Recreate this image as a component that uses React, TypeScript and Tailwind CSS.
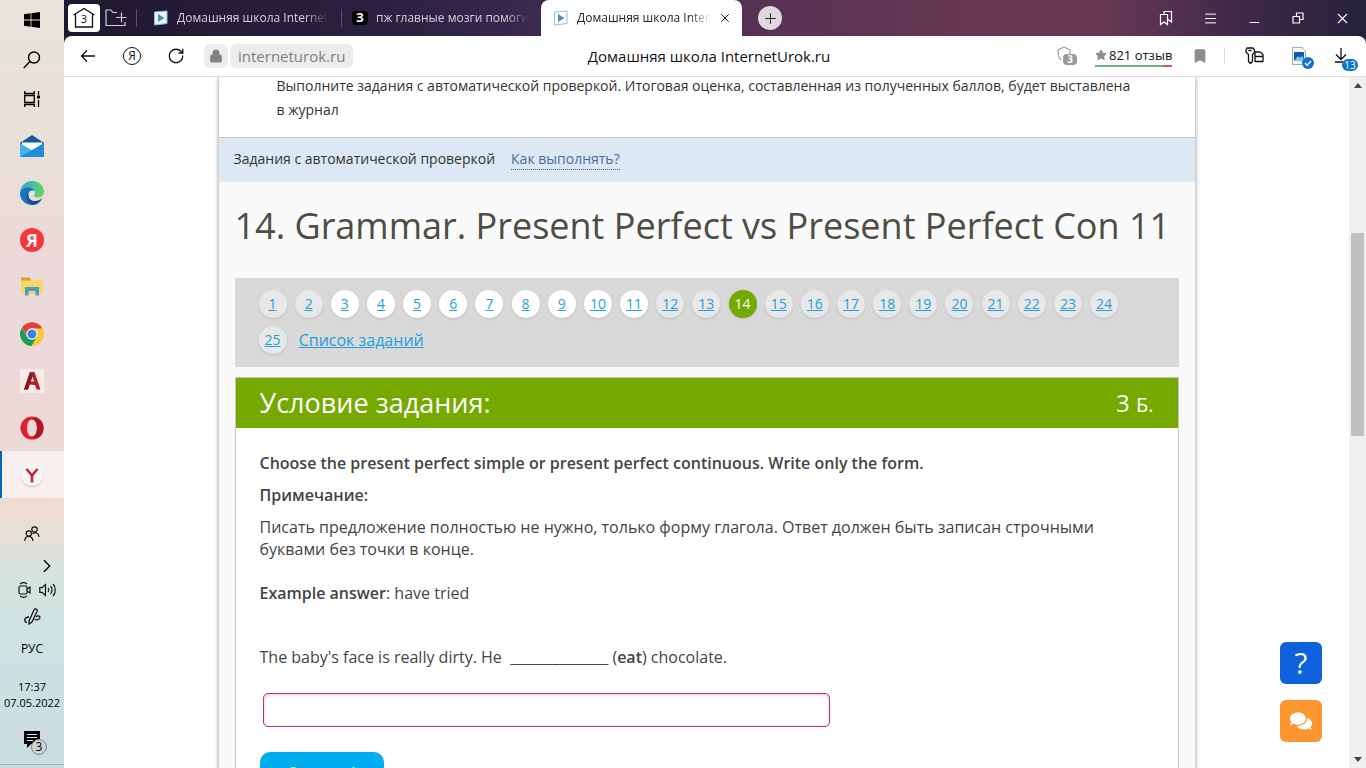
import type { ReactNode } from "react";
import { Bookmark, ChevronRight, Lock, Menu, Minus, Plus, RotateCw, Search, Star, X } from "lucide-react";
import { FaComments } from "react-icons/fa";

const tasks = Array.from({ length: 25 }, (_, i) => i + 1);
const currentTask = 14;

function taskClass(n: number) {
  if (n === currentTask) return "bg-[#76a900] text-white";
  if (n >= 3 && n <= 11) return "bg-white text-[#239fd9] underline";
  return "bg-[#e8e8e8] text-[#239fd9] underline";
}

function SideButton({ label, active, children }: { label: string; active?: boolean; children: ReactNode }) {
  return (
    <button
      aria-label={label}
      className={
        active
          ? "flex h-[47px] w-full shrink-0 items-center justify-center border-l-2 border-[#0067c0] bg-[#f7eeed] pr-0.5"
          : "flex h-[47px] w-full shrink-0 items-center justify-center"
      }
    >
      {children}
    </button>
  );
}

function PlayIcon({ dark }: { dark?: boolean }) {
  return (
    <svg width="16" height="16" viewBox="0 0 16 16" className="shrink-0">
      <path d="M1.500 2 14 1V13.500L1.500 15Z" fill={dark ? "#e4f4fb" : "#fff"} stroke="#8fc0d8" />
      <path d="M5 4 11.500 8 5 12Z" fill="#4e8fb4" />
    </svg>
  );
}

function Taskbar() {
  return (
    <aside className="flex w-16 shrink-0 flex-col items-center overflow-hidden bg-[linear-gradient(180deg,#e6e3da_0%,#e9e0d8_18%,#ecd9d9_35%,#ecd9d8_58%,#efddd2_67%,#d5e4df_75%,#cde2e1_84%,#c9dde2_100%)]">
      <button aria-label="Пуск" className="flex h-10 shrink-0 items-center">
        <svg width="16" height="16" viewBox="0 0 16 16">
          <path d="M0 2.200 6.600 1.300V7.500H0ZM7.400 1.200 16 0V7.500H7.400ZM0 8.400H6.600V14.700L0 13.800ZM7.400 8.400H16V16L7.400 14.800Z" />
        </svg>
      </button>
      <button aria-label="Поиск" className="flex h-10 shrink-0 items-center">
        <svg width="18" height="18" viewBox="0 0 18 18" fill="none" stroke="#000" strokeWidth="1.400">
          <circle cx="11" cy="6.500" r="5.500" />
          <path d="M7 10.500.8 17" />
        </svg>
      </button>
      <button aria-label="Представление задач" className="mb-1 flex h-[38px] shrink-0 items-center">
        <svg width="16" height="16" viewBox="0 0 16 16" fill="none" stroke="#000" strokeWidth="1.300">
          <path d="M.7 0V2.500H10.300V0M.7 16V13.500H10.300V16M.7 4.500H10.300V11.500H.7ZM14.500 0V4M14.500 9V16" />
          <path d="M13 4.500H16V7.500H13Z" fill="#000" stroke="none" />
        </svg>
      </button>
      <SideButton label="Почта">
        <svg width="24" height="22" viewBox="0 0 24 22">
          <path d="M0 8 12 0 24 8V11H0Z" fill="#135a9e" />
          <path d="M2 7.500H22V17H2Z" fill="#fff" />
          <path d="M0 8 12 15.500 24 8V22H0Z" fill="#3fb4ef" />
          <path d="M0 22 24 8V22Z" fill="#1f8fdb" />
        </svg>
      </SideButton>
      <SideButton label="Edge">
        <svg width="24" height="24" viewBox="0 0 24 24">
          <defs>
            <linearGradient id="edge" x1="0" y1="0" x2="1" y2="0.400">
              <stop offset="0" stopColor="#2aa4e4" />
              <stop offset="1" stopColor="#5fd668" />
            </linearGradient>
          </defs>
          <path d="M0 11C1 4 6 0 12 0c7 0 12 5 12 10.500 0 4-3 6-6 6-2.500 0-4-1-4-2 0-.7 1-1 1-3 0-2.500-2.500-4-5.500-4C5 7.500 2 9 0 11Z" fill="url(#edge)" />
          <path d="M0 12C1 8.500 4 6.500 8.500 6.500c3 0 5.500 1.500 6 3.500C9 8 6.500 12.500 8 17c1 3.500 4 6 7 6.500C7 25.500 0 20 0 12Z" fill="#1473c4" />
          <path d="M9.500 10C7 14 9 20 14.500 20c3 0 6-1 8-3-2 4-5 6.500-8.500 7C7 23 4 14 9.500 10Z" fill="#124c91" />
        </svg>
      </SideButton>
      <SideButton label="Яндекс">
        <span className="flex size-6 items-center justify-center rounded-full bg-[#f8353b] text-lg font-bold text-white">Я</span>
      </SideButton>
      <SideButton label="Проводник">
        <svg width="22" height="19" viewBox="0 0 22 19">
          <path d="M0 1H9L11 3.500H22V17H0Z" fill="#f9d466" />
          <path d="M0 .5H8.500L10 3.500H0Z" fill="#d9a11e" />
          <path d="M4 10H18V18.500H14.500V14H7.500V18.500H4Z" fill="#4a9ccb" />
        </svg>
      </SideButton>
      <SideButton label="Chrome">
        <svg width="24" height="24" viewBox="0 0 24 24">
          <path d="M12 12V6.500H22.500A12 12 0 0 1 11.500 24L16.800 14.700Z" fill="#fcc934" />
          <path d="M12 12 16.800 14.700 11.500 24A12 12 0 0 1 2 5.500L7.200 14.700Z" fill="#1f9d55" />
          <path d="M2 5.500A12 12 0 0 1 22.500 6.500H12L7 13.500Z" fill="#dc4437" />
          <circle cx="12" cy="12" r="5.700" fill="#fff" />
          <circle cx="12" cy="12" r="4.500" fill="#3b7fe8" />
        </svg>
      </SideButton>
      <SideButton label="AutoCAD">
        <svg width="24" height="24" viewBox="0 0 24 24">
          <path d="M0 0H24V24H0Z" fill="#f7ebe7" />
          <path d="M4 20.500 10 3H14.500L20.500 20.500H16.500L15 16 9.500 15.500 8 20.500ZM10.500 12.500H14L12.500 7.500Z" fill="#b3222b" fillRule="evenodd" />
          <path d="M4 20.500 10 3 12.500 7.500 8 20.500Z" fill="#8c1720" />
        </svg>
      </SideButton>
      <SideButton label="Opera">
        <svg width="24" height="24" viewBox="0 0 24 24">
          <path d="M12 .5A11.500 11.500 0 1 0 12 23.500 11.500 11.500 0 1 0 12 .5ZM12 3.500C15 3.500 17 7 17 12S15 20.500 12 20.500 7 17 7 12 9 3.500 12 3.500Z" fill="#e0202e" fillRule="evenodd" />
          <path d="M16 1.200A11.500 11.500 0 0 1 16 22.800L12 20.500C15 20.500 17 17 17 12S15 3.500 12 3.500Z" fill="#b01722" />
        </svg>
      </SideButton>
      <SideButton label="Яндекс Браузер" active>
        <svg width="24" height="24" viewBox="0 0 24 24">
          <circle cx="12" cy="12.500" r="11.500" fill="#c8c4c4" />
          <circle cx="12" cy="11.500" r="11.500" fill="#f6f4f4" />
          <path d="M6.500 6 12 12.500 17.500 6M12 12.500V19.500" fill="none" stroke="#d3202f" strokeWidth="2.600" />
        </svg>
      </SideButton>
      <div className="flex w-full flex-1 flex-col items-center pt-[26px]">
        <button aria-label="Люди" className="flex h-5 items-center">
          <svg width="16" height="16" viewBox="0 0 16 16" fill="none" stroke="#111" strokeWidth="1.200">
            <circle cx="10.500" cy="3.500" r="2.700" />
            <circle cx="4.800" cy="7.500" r="2.600" />
            <path d="M.8 15C.8 9 8.800 9 8.800 15M8.500 7.800C11 5.300 15 7 15 11" />
          </svg>
        </button>
        <button aria-label="Показать значки" className="mt-3 flex h-5 w-full items-center justify-end pr-1.5">
          <ChevronRight size={22} strokeWidth={1.400} />
        </button>
        <div className="mt-1 flex h-5 w-full items-center justify-end gap-2 pr-2">
          <svg width="13" height="16" viewBox="0 0 13 16" fill="none" stroke="#111" strokeWidth="1.200">
            <rect x="1" y="4" width="8" height="8" rx="1.500" />
            <path d="M9 7 12 5V11L9 9M2 2C4 .5 7 .5 9 2M2 14C4 15.500 7 15.500 9 14" />
          </svg>
          <svg width="17" height="14" viewBox="0 0 17 14" fill="none" stroke="#111" strokeWidth="1.200">
            <path d="M.8 4.700H3L6.500 1.500V12.500L3 9.300H.8ZM9 5C10 6 10 8 9 9M11.500 3C13.500 5 13.500 9 11.500 11M14 1C17 4 17 10 14 13" />
          </svg>
        </div>
        <svg width="17" height="17" viewBox="0 0 17 17" fill="none" stroke="#111" strokeWidth="1.300" className="mt-2 shrink-0">
          <path d="M5 13 10 2C11 0 14 1 13 3.500L8 14 5 16ZM5 9C0 9-.5 14 3 14.500M12 9C14 7 17 8 15.500 10.500 14.500 12 12 12 10.500 11.500" />
        </svg>
        <span className="mt-3.5 text-xs leading-5">РУС</span>
        <time className="mt-5 text-center text-[11px] leading-4">
          17:37
          <br />
          07.05.2022
        </time>
        <button aria-label="Уведомления" className="relative mt-5">
          <svg width="18" height="18" viewBox="0 0 18 18">
            <path d="M1 0H17V13H8L4 17V13H1Z" />
            <path d="M4 3.500H14M4 6.500H14M4 9.500H10" stroke="#dde8ec" />
          </svg>
          <span className="absolute top-2 left-2 flex size-4 items-center justify-center rounded-full border border-[#888] bg-[#cfd3d5] text-xs">3</span>
        </button>
      </div>
      <div className="h-1 w-full shrink-0 border-t border-[#9fb0b6]" />
    </aside>
  );
}

function TabBar() {
  return (
    <header className="flex h-9 shrink-0 items-center bg-[linear-gradient(90deg,#1f1830_0%,#2a2040_25%,#3d2a50_37%,#573252_54%,#6b3852_72%,#673853_80%,#40294a_90%,#25213a_100%)] text-xs text-[#d5d0dc]">
      <button aria-label="Группы вкладок" className="ml-1 flex h-7 w-8 items-center justify-center rounded-sm bg-white">
        <svg width="24" height="22" viewBox="0 0 24 22">
          <path d="M1.500 8 12 1.500 22.500 8M3.500 7V20H20.500V7" fill="none" stroke="#111" strokeWidth="1.300" />
          <text x="12" y="16" textAnchor="middle" fontSize="11" fontFamily="Open Sans, sans-serif" fill="#111">3</text>
        </svg>
      </button>
      <button aria-label="Новая группа" className="ml-1 flex w-6 justify-center">
        <svg width="22" height="18" viewBox="0 0 22 18" fill="none" stroke="#d5d0dc" strokeWidth="1.200">
          <path d="M12 3.500H8L6 1H1V16.500H20V13M11 8.500H21.500M16.500 3.500V13.500" />
        </svg>
      </button>
      <div className="ml-2 flex h-[18px] w-[205px] items-center gap-2 border-l border-[#5c5369] pl-4">
        <PlayIcon dark />
        <span className="mask-r-from-85% whitespace-nowrap">Домашняя школа Internet</span>
      </div>
      <div className="flex h-[18px] w-[200px] items-center gap-2 border-l border-[#5c5369] pl-2.5">
        <span className="flex h-3.5 w-4 shrink-0 items-center justify-center rounded-sm bg-black font-bold text-white">З</span>
        <span className="mask-r-from-85% whitespace-nowrap">пж главные мозги помоги</span>
      </div>
      <div className="flex h-9 w-[201px] items-center gap-2 rounded-t-lg bg-white px-3 text-[#222]">
        <PlayIcon />
        <span className="mask-r-from-85% whitespace-nowrap">Домашняя школа Inter</span>
        <button aria-label="Закрыть вкладку" className="ml-auto -mr-0.5">
          <X size={14} strokeWidth={1.700} />
        </button>
      </div>
      <button aria-label="Новая вкладка" className="ml-4 flex size-6 items-center justify-center rounded-full bg-[#e0d8e0] text-[#222]">
        <Plus size={17} strokeWidth={1.400} />
      </button>
      <div className="ml-auto flex items-center pr-0.5 text-white">
        <button aria-label="Закладки" className="flex w-11 justify-center">
          <svg width="14" height="16" viewBox="0 0 14 16" fill="none" stroke="#fff" strokeWidth="1.200">
            <path d="M1.500 4.500H8.500V14.500L5 12 1.500 14.500ZM5 4V1.500H12.500V12L9 9.500" />
          </svg>
        </button>
        <button aria-label="Меню" className="flex w-11 justify-center">
          <Menu size={15} strokeWidth={1.600} />
        </button>
        <button aria-label="Свернуть" className="flex w-11 justify-center pt-2">
          <Minus size={15} strokeWidth={1.600} />
        </button>
        <button aria-label="Восстановить" className="flex w-11 justify-center">
          <svg width="12" height="12" viewBox="0 0 12 12" fill="none" stroke="#fff" strokeWidth="1.200">
            <path d="M1 4.500H7.500V11H1ZM4.500 4.500V1H11V7.500H7.500" />
          </svg>
        </button>
        <button aria-label="Закрыть" className="flex w-11 justify-center">
          <X size={17} strokeWidth={1.500} />
        </button>
      </div>
    </header>
  );
}

function AddressBar() {
  return (
    <div className="bg-[#2a2038]">
      <div className="relative flex h-[41px] items-center rounded-t-lg border-b border-[#dedede] bg-white px-4 text-[15px] text-[#111]">
        <button aria-label="Назад">
          <svg width="16" height="14" viewBox="0 0 16 14" fill="none" stroke="#111" strokeWidth="1.300">
            <path d="M15 7H1.500M7 1.500 1.500 7 7 12.500" />
          </svg>
        </button>
        <button aria-label="Яндекс" className="ml-[27px] flex size-[18px] items-center justify-center rounded-full border border-[#111] text-xs">
          Я
        </button>
        <button aria-label="Обновить" className="ml-[26px]">
          <RotateCw size={18} strokeWidth={1.700} />
        </button>
        <button aria-label="Защищено" className="ml-[19px] flex size-6 items-center justify-center rounded-md bg-[#ececec]">
          <Lock size={14} className="fill-[#808080] text-[#808080]" />
        </button>
        <a href="#" className="ml-0.5 rounded-md bg-[#ececec] px-2 leading-6 text-[#808080]">
          interneturok.ru
        </a>
        <span className="absolute inset-x-0 mx-auto w-fit pr-3">Домашняя школа InternetUrok.ru</span>
        <div className="ml-auto flex items-center">
          <button aria-label="Защита" className="relative">
            <svg width="20" height="20" viewBox="0 0 20 20" fill="none" stroke="#a5a5a5" strokeWidth="1.300">
              <path d="M7 1 13 4V8M4 14C2 12 1 9 1 4L7 1" />
            </svg>
            <span className="absolute top-2 left-1.5 h-[11px] w-3.5 rounded-sm bg-[#999] text-center text-[10px] leading-[11px] font-bold text-white">3</span>
          </button>
          <a href="#" className="ml-[18px] flex w-[77px] flex-col text-[13px] leading-5">
            <span className="flex items-center gap-0.5 whitespace-nowrap">
              <Star size={12} className="shrink-0 fill-[#8d8d8d] text-[#8d8d8d]" />
              821 отзыв
            </span>
            <span className="h-0.5 bg-linear-to-r from-[#72ae88] from-88% to-[#cd5c55] to-88%" />
          </a>
          <button aria-label="В закладки" className="ml-5">
            <Bookmark size={16} className="fill-[#8d8d8d] text-[#8d8d8d]" />
          </button>
          <span className="ml-4 h-4 w-px bg-[#ddd]" />
          <button aria-label="Пароли" className="ml-5">
            <svg width="19" height="18" viewBox="0 0 19 18" fill="none" stroke="#111" strokeWidth="1.300" strokeLinejoin="round">
              <path d="M2 1H8L9.500 3V5.500L7.500 7.500V14.500L5.500 16.500 3.500 14.500V7.500L1 5V2.500ZM3.500 3.500H6.500" />
              <path d="M10 5H15L18 7.500V14.500H10ZM10 9.500H18" />
            </svg>
          </button>
          <button aria-label="Скриншот" className="relative ml-7">
            <svg width="14" height="18" viewBox="0 0 14 18">
              <path d="M.5.5H10L13.500 4V17.500H.5Z" fill="#f4f4f4" stroke="#aaa" />
              <path d="M2 5H12V14H2Z" fill="#155ca8" />
              <path d="M2 14 6 9 8 11 10 9 12 12V14Z" fill="#7fc4ea" />
            </svg>
            <span className="absolute top-2.5 left-2.5 flex size-3 items-center justify-center rounded-full bg-[#0f74cc]">
              <svg width="8" height="8" viewBox="0 0 8 8" fill="none" stroke="#fff" strokeWidth="1.400">
                <path d="M1 4 3.200 6.200 7 2" />
              </svg>
            </span>
          </button>
          <button aria-label="Загрузки" className="relative ml-7">
            <svg width="16" height="18" viewBox="0 0 16 18" fill="none" stroke="#111" strokeWidth="1.300">
              <path d="M7 1V12.500M2 7.500 7 12.500 12 7.500M1 15H9" />
            </svg>
            <span className="absolute top-3 left-2 h-3 w-4 rounded-full bg-[#0f74cc] text-center text-[10px] leading-3 text-white">13</span>
          </button>
        </div>
      </div>
    </div>
  );
}

function Lesson() {
  return (
    <main className="mx-auto flex w-full max-w-[976px] flex-col bg-[#fafafa] text-[#444] shadow-[0_0_5px_rgba(0,0,0,0.45)]">
      <p className="h-[61px] border-b border-[#bcc8d0] bg-white pr-12 pl-[58px] text-sm leading-6 text-[#333]">
        <span className="-mt-[3px] block">
          Выполните задания с автоматической проверкой. Итоговая оценка, составленная из полученных баллов, будет выставлена
          <br />в журнал
        </span>
      </p>
      <div className="flex h-11 items-center gap-4 bg-[#dce9f4] px-[15px] pb-0.5 text-sm text-[#333]">
        <span>Задания с автоматической проверкой</span>
        <a href="#" className="border-b border-dotted border-[#3f6593] leading-5 text-[#4a6d9c]">
          Как выполнять?
        </a>
      </div>
      <div className="px-4">
        <h1 className="pt-4 text-4xl leading-[56px] whitespace-nowrap text-[#4d4d44]">14. Grammar. Present Perfect vs Present Perfect Con 11</h1>
        <nav className="mt-6 bg-[#d9d9d9] pt-2 pr-12 pb-[9px] pl-6">
          {tasks.map((n) => (
            <span key={n}>
              <a
                href="#"
                className={`my-1 mr-1 inline-flex size-7 items-center justify-center rounded-full align-middle text-sm shadow-sm ${taskClass(n)}`}
              >
                {n}
              </a>{" "}
            </span>
          ))}
          <a href="#" className="ml-1 align-middle text-base leading-7 text-[#239fd9] underline">
            Список заданий
          </a>
        </nav>
        <section className="mt-2.5 border border-[#c4c4c4] bg-white pb-20 text-base leading-[22px]">
          <div className="flex h-[50px] items-center justify-between bg-[#76a900] px-6 text-white">
            <h2 className="text-[27px]">Условие задания:</h2>
            <span className="text-2xl">
              3 <span className="text-xl">Б.</span>
            </span>
          </div>
          <div className="px-6 pt-6">
            <p className="font-semibold">Choose the present perfect simple or present perfect continuous. Write only the form.</p>
            <p className="mt-2.5 font-semibold">Примечание:</p>
            <p className="mt-2.5">
              Писать предложение полностью не нужно, только форму глагола. Ответ должен быть записан строчными буквами без точки в конце.
            </p>
            <p className="mt-[22px]">
              <b className="font-semibold">Example answer</b>: have tried
            </p>
            <p className="mt-[42px]">
              <label htmlFor="answer">
                The baby's face is really dirty. He&nbsp; ______________ (<b className="font-semibold">eat</b>) chocolate.
              </label>
            </p>
            <input
              id="answer"
              type="text"
              className="mt-[25px] ml-[3px] block h-[34px] w-[567px] rounded-[5px] border border-[#b0307a] px-2 shadow-[inset_0_1px_3px_rgba(200,60,140,0.35)] outline-none"
            />
            <button className="mt-[25px] h-10 w-[124px] rounded-[10px] bg-[#00aeef] text-sm text-white">Ответить!</button>
          </div>
        </section>
      </div>
    </main>
  );
}

export default function App() {
  return (
    <div className="flex h-screen overflow-hidden bg-white font-['Open_Sans','Noto_Sans',sans-serif] text-black">
      <Taskbar />
      <div className="flex min-w-0 flex-1 flex-col">
        <TabBar />
        <AddressBar />
        <div className="flex min-h-0 flex-1">
          <div className="min-w-0 flex-1 overflow-hidden">
            <Lesson />
          </div>
          <div className="flex w-[17px] shrink-0 flex-col items-center bg-[#f0f0f0] py-1.5">
            <svg width="8" height="5" viewBox="0 0 8 5">
              <path d="M0 5 4 0 8 5Z" fill="#444" />
            </svg>
            <div className="mt-[145px] h-[203px] w-[13px] bg-[#c0c0c0]" />
            <svg width="8" height="5" viewBox="0 0 8 5" className="mt-auto">
              <path d="M0 0 4 5 8 0Z" fill="#444" />
            </svg>
          </div>
        </div>
      </div>
      <div className="fixed right-11 bottom-[26px] flex flex-col gap-4">
        <button aria-label="Помощь" className="size-[42px] rounded-md bg-[#0f62dc] text-3xl text-white">
          ?
        </button>
        <button aria-label="Чат" className="flex size-[42px] items-center justify-center rounded-md bg-[#fb9630] text-white">
          <FaComments size={22} />
        </button>
      </div>
    </div>
  );
}
